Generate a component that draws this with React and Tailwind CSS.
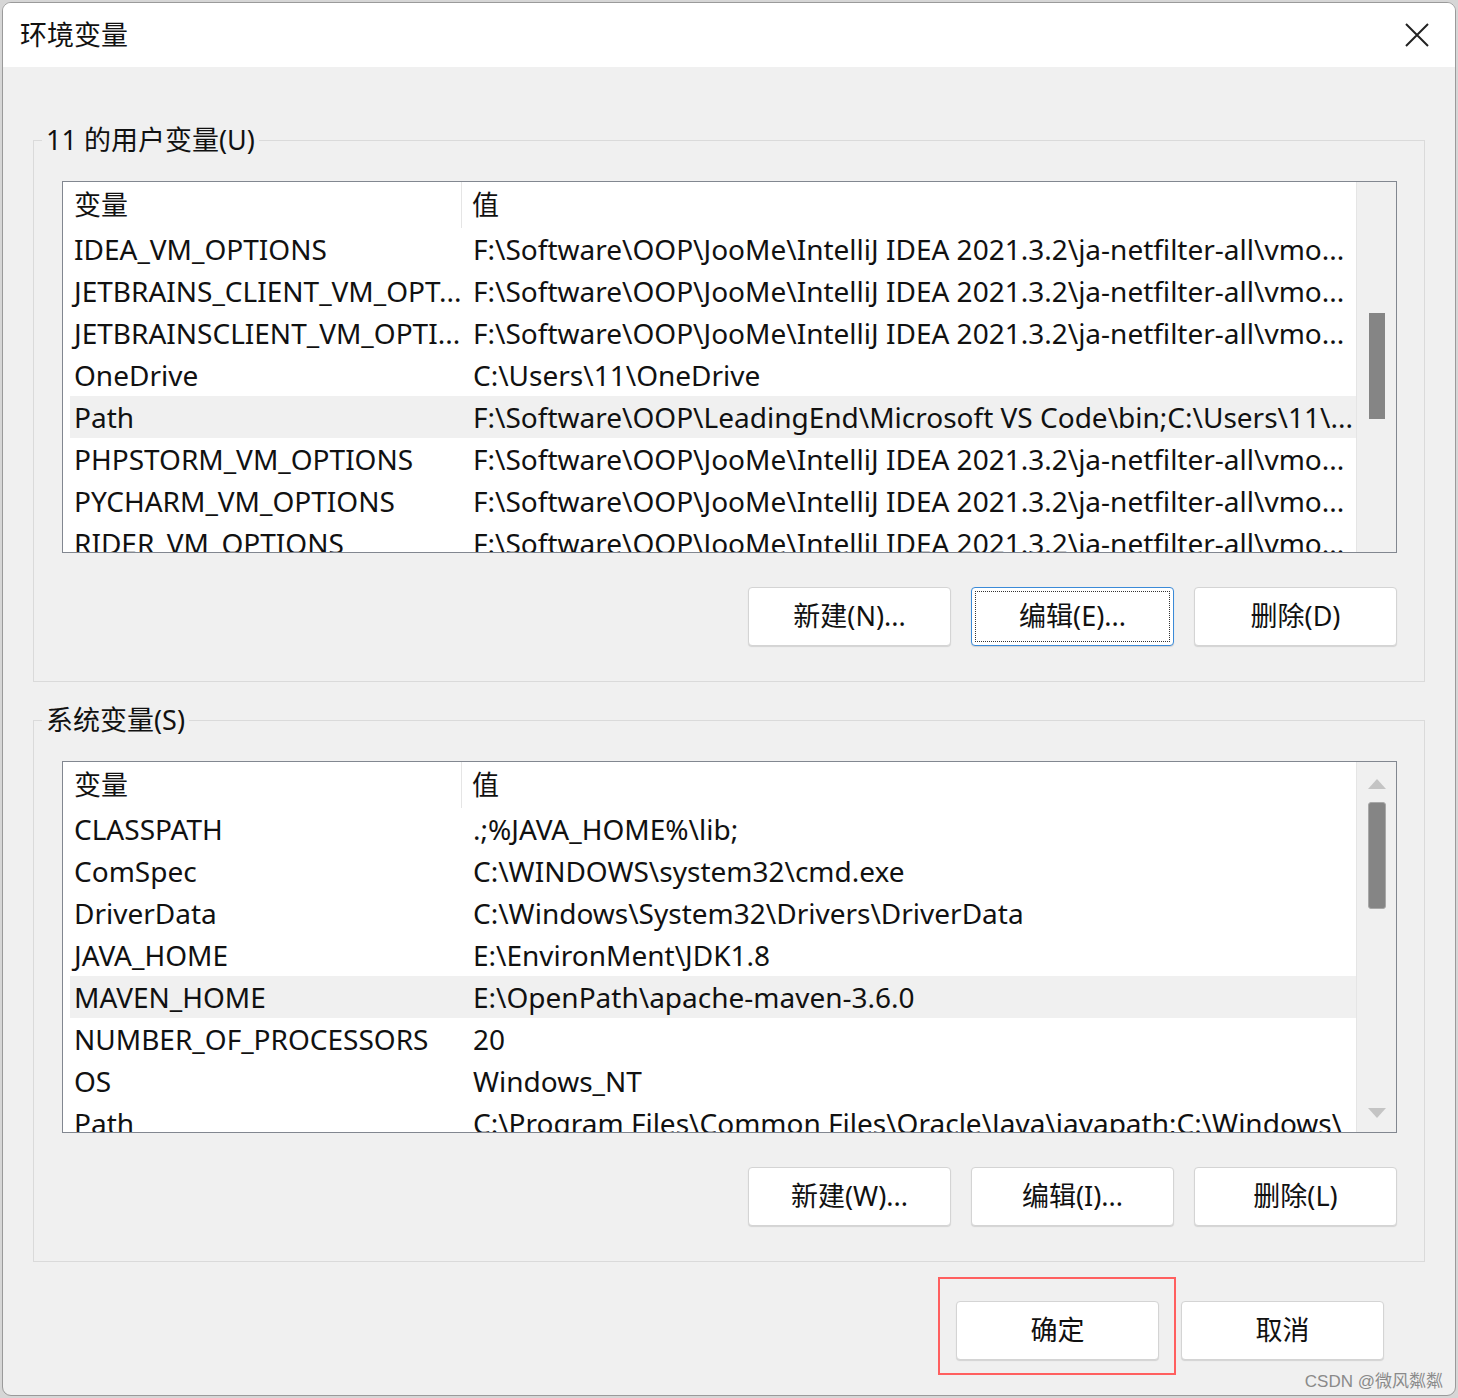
const userRows = [
  ["IDEA_VM_OPTIONS", "F:\\Software\\OOP\\JooMe\\IntelliJ IDEA 2021.3.2\\ja-netfilter-all\\vmo..."],
  ["JETBRAINS_CLIENT_VM_OPT...", "F:\\Software\\OOP\\JooMe\\IntelliJ IDEA 2021.3.2\\ja-netfilter-all\\vmo..."],
  ["JETBRAINSCLIENT_VM_OPTI...", "F:\\Software\\OOP\\JooMe\\IntelliJ IDEA 2021.3.2\\ja-netfilter-all\\vmo..."],
  ["OneDrive", "C:\\Users\\11\\OneDrive"],
  ["Path", "F:\\Software\\OOP\\LeadingEnd\\Microsoft VS Code\\bin;C:\\Users\\11\\..."],
  ["PHPSTORM_VM_OPTIONS", "F:\\Software\\OOP\\JooMe\\IntelliJ IDEA 2021.3.2\\ja-netfilter-all\\vmo..."],
  ["PYCHARM_VM_OPTIONS", "F:\\Software\\OOP\\JooMe\\IntelliJ IDEA 2021.3.2\\ja-netfilter-all\\vmo..."],
  ["RIDER_VM_OPTIONS", "F:\\Software\\OOP\\JooMe\\IntelliJ IDEA 2021.3.2\\ja-netfilter-all\\vmo..."],
];

const systemRows = [
  ["CLASSPATH", ".;%JAVA_HOME%\\lib;"],
  ["ComSpec", "C:\\WINDOWS\\system32\\cmd.exe"],
  ["DriverData", "C:\\Windows\\System32\\Drivers\\DriverData"],
  ["JAVA_HOME", "E:\\EnvironMent\\JDK1.8"],
  ["MAVEN_HOME", "E:\\OpenPath\\apache-maven-3.6.0"],
  ["NUMBER_OF_PROCESSORS", "20"],
  ["OS", "Windows_NT"],
  ["Path", "C:\\Program Files\\Common Files\\Oracle\\Java\\javapath;C:\\Windows\\"],
];

function VarList({ rows, selected, arrows }) {
  return (
    <div className="mt-[23px] flex h-[372px] overflow-hidden border border-[#828790] bg-white text-[28px]">
      <div className="min-w-0 flex-1 pl-[7px]">
        <div className="flex h-[46px] items-stretch text-[27px]">
          <div className="flex w-[392px] items-center border-r border-[#e5e5e5] pl-[4px]">变量</div>
          <div className="flex flex-1 items-center pl-[10px]">值</div>
        </div>
        {rows.map(([name, value], i) => (
          <div
            key={name + i}
            className={
              "flex h-[42px] items-center whitespace-nowrap " +
              (i === selected ? "bg-[#f0f0f0]" : "")
            }
          >
            <div className="w-[392px] overflow-hidden pl-[4px]">{name}</div>
            <div className="min-w-0 flex-1 overflow-hidden pl-[11px]">{value}</div>
          </div>
        ))}
      </div>
      <div className="flex w-[40px] flex-col items-center border-l border-[#e5e5e5] bg-[#f0f0f0]">
        {arrows ? (
          <>
            <svg className="mt-[17px]" width="18" height="10" viewBox="0 0 18 10">
              <path d="M9 0 L18 10 L0 10 Z" fill="#c4c4c4" />
            </svg>
            <div className="mt-[13px] h-[107px] w-[18px] rounded-[3px] border border-[#a8a8a8] bg-[#858585]" />
            <div className="flex-1" />
            <svg className="mb-[14px]" width="18" height="10" viewBox="0 0 18 10">
              <path d="M0 0 L18 0 L9 10 Z" fill="#c4c4c4" />
            </svg>
          </>
        ) : (
          <div className="mt-[131px] h-[106px] w-[16px] bg-[#858585]" />
        )}
      </div>
    </div>
  );
}

function Btn({ children, focused }) {
  return (
    <button
      className={
        "flex h-[59px] w-[203px] items-center justify-center rounded-[4px] bg-white text-[27px] shadow-[0_1px_1px_rgba(0,0,0,0.12)] " +
        (focused
          ? "border border-[#3a8ad8] outline-1 outline-offset-[-5px] outline-dotted outline-[#333]"
          : "border border-[#d4d4d4]")
      }
    >
      {children}
    </button>
  );
}

function Group({ title, rows, selected, arrows, buttons }) {
  return (
    <fieldset className="border border-[#dadada] pb-[35px] pl-[28px] pr-[27px]">
      <legend className="-ml-[20px] px-[4px] text-[27px] leading-[36px]">{title}</legend>
      <VarList rows={rows} selected={selected} arrows={arrows} />
      <div className="mt-[34px] flex justify-end gap-[20px]">
        <Btn>{buttons[0]}</Btn>
        <Btn focused={buttons[3]}>{buttons[1]}</Btn>
        <Btn>{buttons[2]}</Btn>
      </div>
    </fieldset>
  );
}

export default function App() {
  return (
    <div className="h-[1398px] w-[1458px] bg-[#d6d6d6] p-[2px] font-['Noto_Sans','Noto_Sans_CJK_SC',sans-serif] text-[27px] text-[#111]">
      <div className="relative flex h-full flex-col overflow-hidden rounded-[9px] border border-[#9a9a9a] bg-[#f0f0f0]">
        <div className="flex h-[64px] items-center justify-between bg-white pl-[17px] pr-[25px]">
          <span className="text-[27px]">环境变量</span>
          <svg width="26" height="26" viewBox="0 0 26 26">
            <path d="M2 2 L24 24 M24 2 L2 24" stroke="#222" strokeWidth="2" />
          </svg>
        </div>
        <div className="flex flex-1 flex-col px-[30px] pt-[55px]">
          <Group
            title="11 的用户变量(U)"
            rows={userRows}
            selected={4}
            buttons={["新建(N)...", "编辑(E)...", "删除(D)", true]}
          />
          <div className="mt-[20px]">
            <Group
              title="系统变量(S)"
              rows={systemRows}
              selected={4}
              arrows
              buttons={["新建(W)...", "编辑(I)...", "删除(L)", false]}
            />
          </div>
          <div className="mt-[39px] flex justify-end gap-[22px] pr-[41px]">
            <div className="relative">
              <Btn>确定</Btn>
              <div className="pointer-events-none absolute -bottom-[15px] -left-[18px] -right-[17px] -top-[24px] border-2 border-[#ff5f5f]" />
            </div>
            <Btn>取消</Btn>
          </div>
        </div>
        <div className="absolute bottom-[1px] right-[12px] font-['Liberation_Sans','Noto_Sans_CJK_SC',sans-serif] text-[17px] text-[#8a8a8a]">
          CSDN @微风粼粼
        </div>
      </div>
    </div>
  );
}
